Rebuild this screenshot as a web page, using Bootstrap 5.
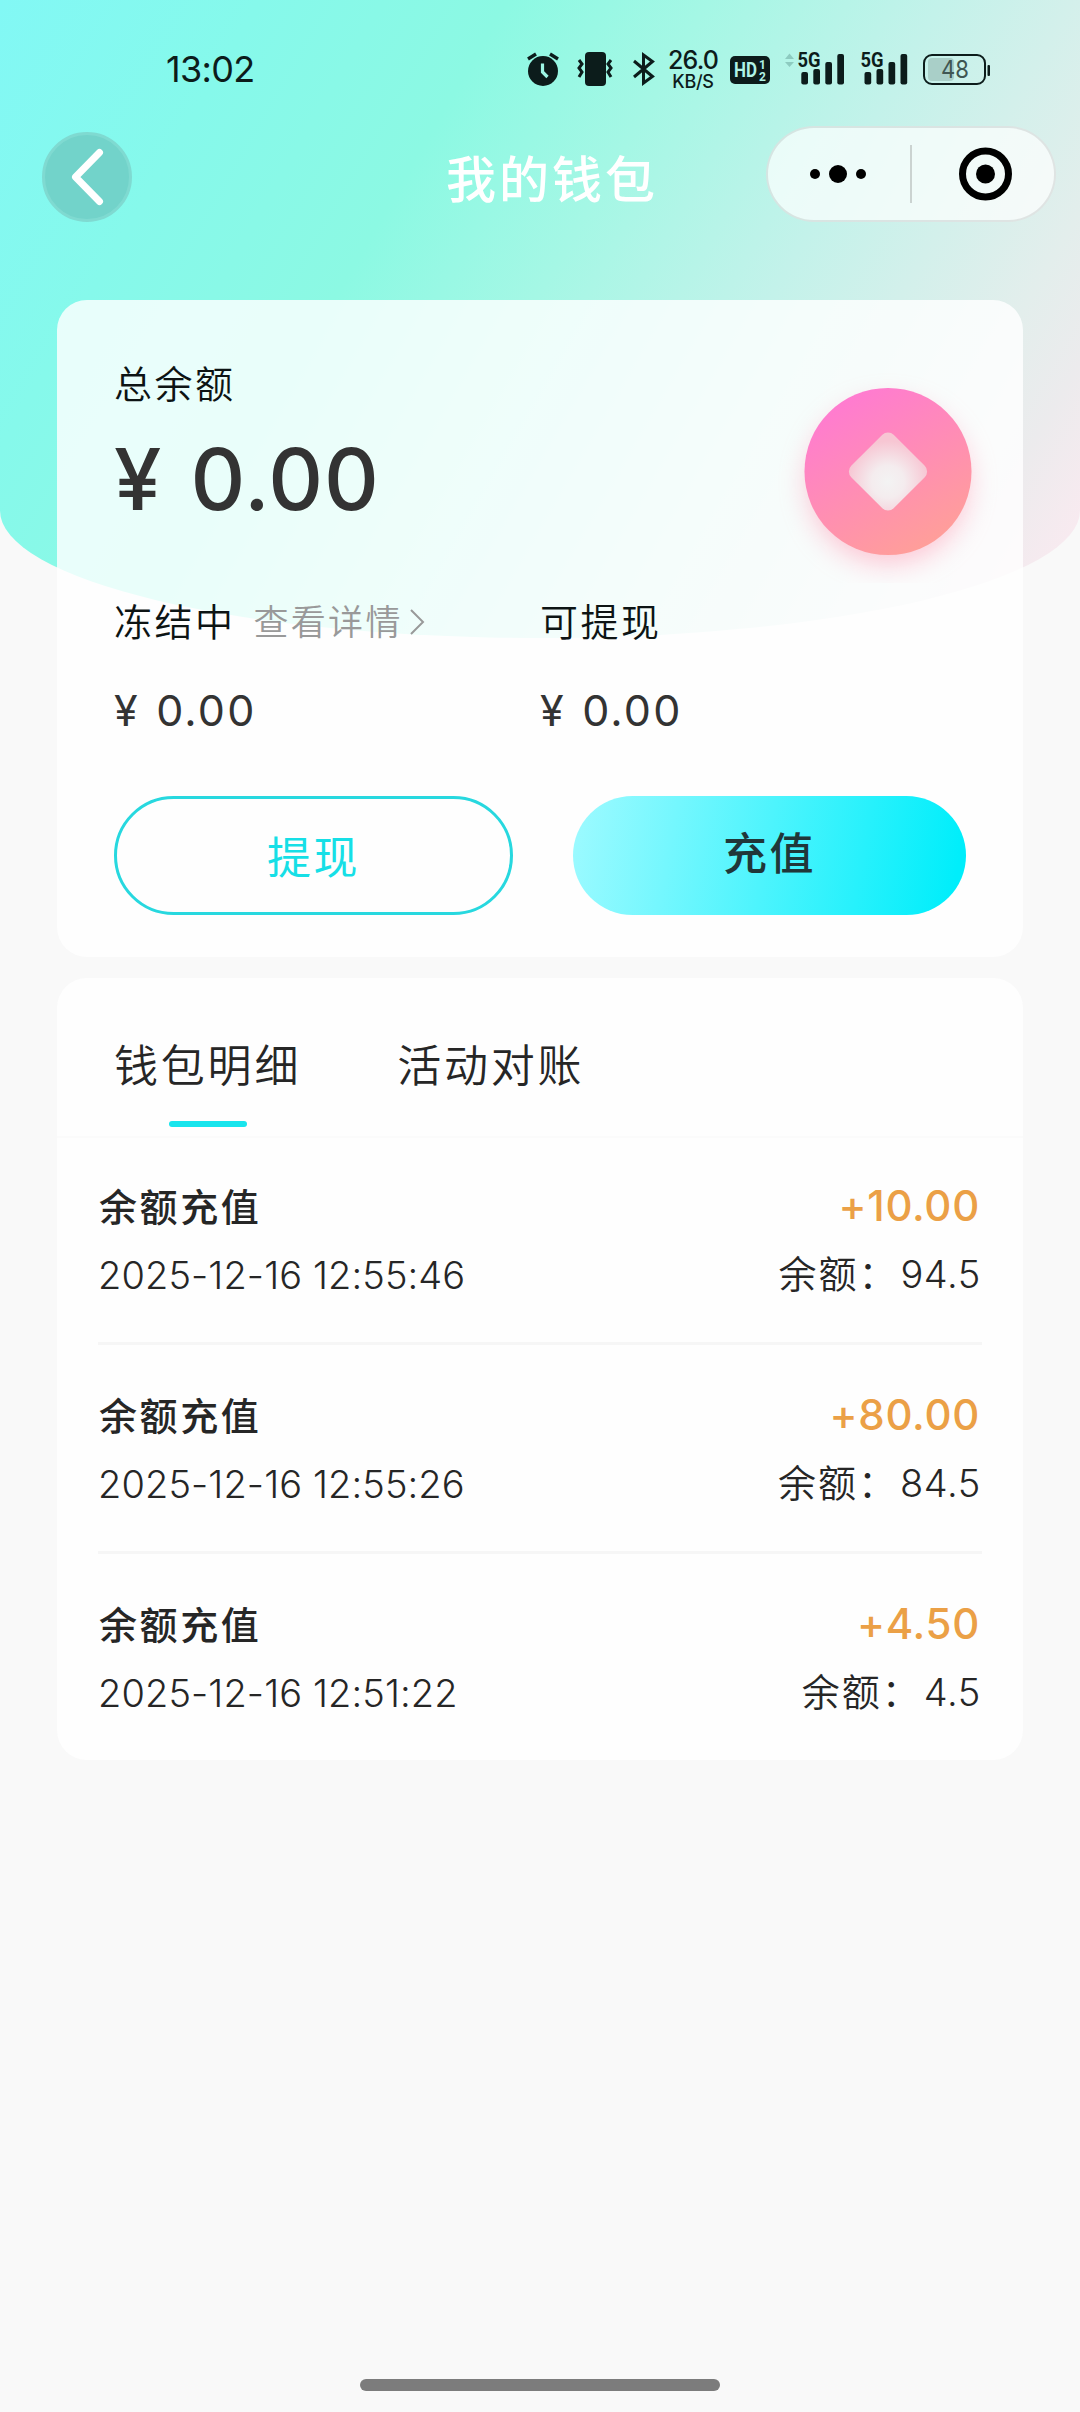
<!DOCTYPE html>
<html lang="zh-CN">
<head>
<meta charset="utf-8">
<meta name="viewport" content="width=device-width, initial-scale=1">
<title>我的钱包</title>
<link href="https://cdn.jsdelivr.net/npm/bootstrap@5.3.0/dist/css/bootstrap.min.css" rel="stylesheet">
<style>
  body { font-family: Inter, "Noto Sans CJK SC", sans-serif; background: #f9f9f9; color: #262626; }
  .phone { width: 1080px; height: 2412px; overflow: hidden; }
  .hero-bg { top: 0; left: 0; width: 1080px; height: 638px; border-radius: 0 0 50% 50% / 0 0 20% 20%;
    background: linear-gradient(120deg, #82f8f5 0%, #86f9eb 18%, #8cf9e3 35%, #a5f7e5 49%, #c3f2ea 65%, #e3eeec 83%, #ecebed 89%, #f9eaf0 96%); }
  .page-body { z-index: 1; }
  .status { height: 126px; padding: 52px 89px 0 166px; color: #0c1c1b; }
  .clock { font-size: 36px; line-height: 34px; letter-spacing: -.7px; }
  .net-speed { width: 54px; text-align: center; font-weight: 500; margin: -4px 10px 0 11px; }
  .net-speed .rate { font-size: 25px; line-height: 25px; letter-spacing: -.9px; }
  .net-speed .unit { font-size: 18px; line-height: 18px; letter-spacing: -.3px; }
  .sig { margin-top: -6px; }
  .topbar { height: 174px; padding: 0 24px 0 42px; }
  .back-btn { width: 90px; height: 90px; margin-top: 6px; border: 3px solid #7fdad1; background: #72d3ca; }
  .page-title { font-size: 50px; line-height: 60px; letter-spacing: 3px; font-weight: 500; margin: 24px 0 0 314px; }
  .capsule { width: 290px; height: 96px; border: 2px solid rgba(0,0,0,.09); background: rgba(255,255,255,.7); }
  .panel { width: 966px; border-radius: 30px; }
  .balance { height: 657px; padding: 60px 57px 42px; background: rgba(255,255,255,.81); }
  .cap { font-size: 38px; line-height: 48px; letter-spacing: 2.5px; color: #0d1414; font-weight: 350; }
  .total { font-size: 85px; line-height: 96px; letter-spacing: .8px; word-spacing: 5px; font-weight: 450; color: #333; margin-top: 24px; }
  .sum { font-size: 43px; line-height: 50px; letter-spacing: 2.2px; word-spacing: 2px; color: #333; margin-top: 39px; }
  .coin { margin: -7px -32px -55px 0; }
  .half { width: 426px; }
  .detail-link { font-size: 35px; letter-spacing: 2.3px; color: #999; line-height: 48px; margin-left: 18px; font-weight: 350; }
  .chev { margin-left: 6px; }
  .pill { height: 119px; font-size: 44px; letter-spacing: 2.6px; border-radius: 60px; padding: 0; }
  .pill-out { width: 399px; border: 3px solid #27d8df; color: #16dfe6; padding-top: 4px; }
  .pill-fill { width: 393px; border: 0; color: #203739; font-weight: 500; background: linear-gradient(100deg, #9bfaff 2%, #00eefb 96%); padding-bottom: 3px; }
  .records { margin-top: 21px; height: 782px; background: #fefefe; }
  .tabs { height: 160px; padding: 58px 57px 0; border-bottom: 2px solid #fbfbfb; gap: 96px; }
  .tab-item { font-size: 44px; line-height: 60px; letter-spacing: 2.8px; color: #262626; font-weight: 350; }
  .tab-mark { width: 78px; height: 6px; border-radius: 3px; background: #18e5ed; margin: 25px 0 0 1px; }
  .entries { padding: 0 41px; margin-top: -2px; }
  .entry { height: 209px; padding-top: 47px; border-bottom: 3px solid #f6f6f6; }
  .entry:last-child { border-bottom: 0; }
  .kind { font-size: 38px; line-height: 48px; letter-spacing: 2.6px; font-weight: 500; padding-left: 1px; }
  .amount { font-size: 42px; line-height: 48px; letter-spacing: .7px; color: #eba046; font-weight: 450; padding-right: 2px; margin-top: -1px; margin-bottom: 1px; }
  .when, .left-over { font-size: 38px; line-height: 48px; margin-top: 20px; font-weight: 350; }
  .when { letter-spacing: .1px; }
  .left-over { letter-spacing: 2px; }
  .left-over span { letter-spacing: .6px; margin-left: 2px; padding-right: 1px; }
  .home-bar { width: 360px; height: 12px; border-radius: 6px; background: #7c7c7c; margin-bottom: 21px; }
</style>
<script src="https://cdn.jsdelivr.net/npm/bootstrap@5.3.0/dist/js/bootstrap.bundle.min.js"></script>
</head>
<body>
<div class="phone position-relative d-flex flex-column">
  <div class="hero-bg position-absolute"></div>
  <div class="page-body position-relative flex-grow-1 d-flex flex-column align-items-center">
    <div class="status w-100 d-flex align-items-start">
      <div class="clock me-auto">13:02</div>
      <svg width="34" height="34" viewBox="0 0 34 34"><circle cx="17" cy="19" r="15" fill="#0c1c1b"/><path d="M2 7 10 2M32 7 24 2" stroke="#0c1c1b" stroke-width="3.4"/><path d="M16.5 11.500V20l5 5" fill="none" stroke="#9df7e5" stroke-width="3.200"/></svg>
      <svg width="36" height="34" viewBox="0 0 36 34" style="margin-left:17px"><rect x="8" y="0" width="21" height="34" rx="4" fill="#0c1c1b"/><path d="M2 8 5 12 2 16 5 20 2 25M34 8 31 12 34 16 31 20 34 25" fill="none" stroke="#0c1c1b" stroke-width="3"/></svg>
      <svg width="22" height="34" viewBox="0 0 22 34" style="margin-left:20px"><path d="M1 9 19.500 24.500 10.500 31V3L19.500 9.500 1 25" fill="none" stroke="#0c1c1b" stroke-width="3"/></svg>
      <div class="net-speed"><div class="rate">26.0</div><div class="unit">KB/S</div></div>
      <svg width="40" height="34" viewBox="0 0 40 34"><rect y="4" width="40" height="28" rx="5" fill="#0c1c1b"/><g fill="#b0f3e6" font-family="Roboto" font-weight="700"><text x="4" y="25" font-size="20" textLength="23" lengthAdjust="spacingAndGlyphs">HD</text><text x="29" y="17" font-size="12">1</text><text x="29" y="29" font-size="12">2</text></g></svg>
      <svg class="sig" width="61" height="40" viewBox="0 -6 61 40" style="margin-left:14px"><path d="M1 7 5.500 1.500 10 7zM1 10 5.500 15 10 10z" fill="#8dcbc0"/><g fill="#0c1c1b"><text x="13.500" y="15" font-family="Roboto" font-weight="700" font-size="20" textLength="23" lengthAdjust="spacingAndGlyphs">5G</text><rect x="17.300" y="20" width="6.700" height="12.500" rx="2"/><rect x="29.300" y="17" width="6.700" height="15.500" rx="2"/><rect x="41.300" y="10" width="6.700" height="22.500" rx="2"/><rect x="53.300" y="2" width="6.700" height="30.500" rx="2"/></g></svg>
      <svg class="sig" width="48" height="40" viewBox="0 -6 48 40" style="margin-left:15px"><g fill="#0c1c1b"><text x="0.500" y="15" font-family="Roboto" font-weight="700" font-size="20" textLength="23" lengthAdjust="spacingAndGlyphs">5G</text><rect x="4.500" y="20" width="6.700" height="12.500" rx="2"/><rect x="16.500" y="17" width="6.700" height="15.500" rx="2"/><rect x="28.500" y="10" width="6.700" height="22.500" rx="2"/><rect x="40.500" y="2" width="6.700" height="30.500" rx="2"/></g></svg>
      <svg width="68" height="34" viewBox="0 0 68 34" style="margin-left:15px"><rect x="5" y="6" width="26" height="23" rx="4" fill="#a9cfc8"/><rect x="1" y="3" width="61" height="29" rx="8" fill="none" stroke="#0c1c1b" stroke-width="2"/><rect x="64.500" y="13" width="2.500" height="11" rx="1" fill="#0c1c1b"/><text x="32" y="26" text-anchor="middle" font-family="Inter" font-size="24" textLength="28" lengthAdjust="spacingAndGlyphs" fill="#3f5652">48</text></svg>
    </div>

    <nav class="topbar w-100 d-flex align-items-start" aria-label="导航">
      <div class="back-btn rounded-circle d-flex align-items-center justify-content-center">
        <svg width="40" height="60" viewBox="0 0 40 60"><path d="M32.500 5.500 8.500 30 32.500 54.500" fill="none" stroke="#fff" stroke-width="7" stroke-linecap="round" stroke-linejoin="round"/></svg>
      </div>
      <div class="page-title text-white">我的钱包</div>
      <div class="capsule ms-auto rounded-pill">
        <svg width="286" height="92" viewBox="0 0 286 92"><circle cx="47" cy="46" r="5"/><circle cx="70" cy="46" r="9"/><circle cx="93" cy="46" r="5"/><path d="M143 17V75" stroke="#cbd3d1" stroke-width="2"/><circle cx="217.500" cy="46" r="23" fill="none" stroke="#000" stroke-width="7"/><circle cx="217.500" cy="46" r="9.500"/></svg>
      </div>
    </nav>

    <section class="panel balance">
      <div class="d-flex justify-content-between">
        <div>
          <div class="cap">总余额</div>
          <div class="total">¥ 0.00</div>
        </div>
        <svg class="coin" width="220" height="230" viewBox="0 0 220 230">
          <defs>
            <linearGradient id="coinFill" x1=".2" y1=".05" x2=".72" y2=".98"><stop offset="0" stop-color="#ff7ad2"/><stop offset="1" stop-color="#ff9f98"/></linearGradient>
            <radialGradient id="holeFill" cx=".62" cy=".62" r=".68"><stop offset="0" stop-color="#f3f3f3"/><stop offset=".4" stop-color="#f4ecee"/><stop offset="1" stop-color="#f7c6d3"/></radialGradient>
            <filter id="soft" x="-40%" y="-40%" width="180%" height="180%"><feGaussianBlur stdDeviation="14"/></filter>
          </defs>
          <circle cx="110" cy="130" r="80" fill="#ff8aa8" opacity=".5" filter="url(#soft)"/>
          <circle cx="110" cy="118.500" r="83.500" fill="url(#coinFill)"/>
          <rect x="80" y="88.500" width="60" height="60" rx="8" fill="url(#holeFill)" transform="rotate(45 110 118.500)"/>
        </svg>
      </div>
      <div class="d-flex" style="margin-top:70px">
        <div class="half">
          <div class="d-flex align-items-center"><span class="cap">冻结中</span><span class="detail-link">查看详情</span><svg class="chev" width="16" height="28" viewBox="0 0 16 28"><path d="M2 2 14 14 2 26" fill="none" stroke="#999" stroke-width="2"/></svg></div>
          <div class="sum">¥ 0.00</div>
        </div>
        <div>
          <div class="cap">可提现</div>
          <div class="sum">¥ 0.00</div>
        </div>
      </div>
      <div class="d-flex justify-content-between" style="margin-top:61px">
        <button class="btn pill pill-out">提现</button>
        <button class="btn pill pill-fill">充值</button>
      </div>
    </section>

    <section class="panel records">
      <div class="tabs d-flex">
        <div class="tab-item d-flex flex-column align-items-center">钱包明细<div class="tab-mark"></div></div>
        <div class="tab-item">活动对账</div>
      </div>
      <div class="entries">
        <div class="entry d-flex justify-content-between">
          <div><div class="kind">余额充值</div><div class="when">2025-12-16 12:55:46</div></div>
          <div class="text-end"><div class="amount">+10.00</div><div class="left-over">余额：<span>94.5</span></div></div>
        </div>
        <div class="entry d-flex justify-content-between">
          <div><div class="kind">余额充值</div><div class="when">2025-12-16 12:55:26</div></div>
          <div class="text-end"><div class="amount">+80.00</div><div class="left-over">余额：<span>84.5</span></div></div>
        </div>
        <div class="entry d-flex justify-content-between">
          <div><div class="kind">余额充值</div><div class="when">2025-12-16 12:51:22</div></div>
          <div class="text-end"><div class="amount">+4.50</div><div class="left-over">余额：<span>4.5</span></div></div>
        </div>
      </div>
    </section>
    <div class="home-bar mt-auto"></div>
  </div>
</div>
</body>
</html>
